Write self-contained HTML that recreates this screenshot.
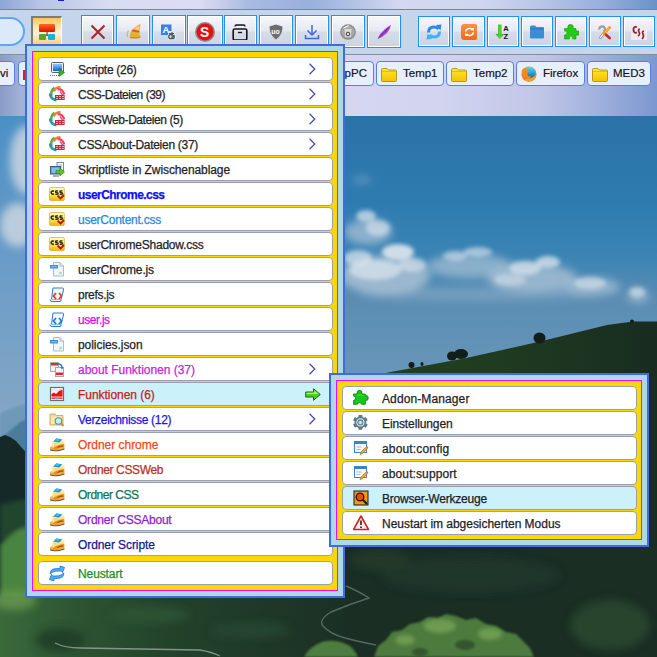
<!DOCTYPE html>
<html><head><meta charset="utf-8">
<style>
html,body{margin:0;padding:0;width:657px;height:657px;overflow:hidden;position:relative;font-family:"Liberation Sans",sans-serif;background:#1d2f24;}
.a{position:absolute;}
#bg{left:0;top:0;width:657px;height:657px;}
#topbar{left:0;top:0;width:657px;height:9px;background:linear-gradient(90deg,#8ea6d2 0px,#b6c4e6 40px,#d8dcf2 110px,#dcdcf4 200px,#a8bae0 250px,#98b0dc 310px,#b0c0e4 350px,#d4d8f2 400px,#d0d6f0 480px,#b8c6e8 540px,#98b0dc 600px,#6a92c8 657px);}
#line1{left:0;top:9px;width:657px;height:1px;background:#7f848c;}
#toolbar{left:0;top:10px;width:657px;height:44px;background:#c5d5ec;}
#line2{left:0;top:54px;width:657px;height:1px;background:#878c96;}
#bmbar{left:0;top:55px;width:657px;height:61px;background:radial-gradient(ellipse 50px 30px at 640px 95px,rgba(70,110,185,0.75),rgba(70,110,185,0)),linear-gradient(90deg,#8a9cc6 0px,#a0b0d6 20px,#c8cce8 120px,#d6d6f0 330px,#d2d4f0 440px,#c0c6e6 540px,#a4b4de 590px,#7c98d0 657px);}
.tb{position:absolute;top:15px;height:33px;box-sizing:border-box;border:1px solid #1e90ff;box-shadow:inset 0 0 0 1px #fff;background:linear-gradient(#f7f8fb 0%,#e4e8f0 48%,#d6dce8 52%,#ccd4e2 100%);}
.tb2{top:16px;height:31px;}
.bm{position:absolute;top:61px;height:25px;box-sizing:border-box;border:1px solid #5a7ede;border-radius:4px;background:#e6effc;font-size:11.5px;color:#201020;line-height:23px;white-space:nowrap;}
.bm span{-webkit-text-stroke:0.2px currentColor;}
.mb{position:absolute;background:#4169e1;}
.mc{position:absolute;background:#add8e6;}
.mm{position:absolute;background:#ff00ff;}
.my{position:absolute;background:#ffd700;}
.it{position:absolute;box-sizing:border-box;height:24px;border:1px solid #9aa0ad;border-radius:4px;background:#fff;font-size:12px;line-height:22px;white-space:nowrap;color:#1e1e28;}
.it span{position:absolute;left:39px;top:1px;-webkit-text-stroke:0.25px currentColor;}
.it .ic{position:absolute;left:10px;top:3px;width:16px;height:16px;}
.it .ar{position:absolute;left:269px;top:5px;width:8px;height:12px;}
.it .ga{position:absolute;left:266px;top:5px;}
.hl{background:#cbf1fb;}
</style></head>
<body>
<svg id="bg" class="a" width="657" height="657" viewBox="0 0 657 657">
  <defs>
    <linearGradient id="sky" x1="0" y1="116" x2="0" y2="420" gradientUnits="userSpaceOnUse">
      <stop offset="0" stop-color="#2a72a7"/>
      <stop offset="0.28" stop-color="#2e7bb0"/>
      <stop offset="0.45" stop-color="#3a84b4"/>
      <stop offset="0.6" stop-color="#5a8cb2"/>
      <stop offset="0.85" stop-color="#6896ba"/>
      <stop offset="1" stop-color="#7aa2c0"/>
    </linearGradient>
    <linearGradient id="skyL" x1="0" y1="116" x2="0" y2="410" gradientUnits="userSpaceOnUse">
      <stop offset="0" stop-color="#4a90c6"/>
      <stop offset="0.5" stop-color="#6a9cc8"/>
      <stop offset="1" stop-color="#82a6c4"/>
    </linearGradient>
    <filter id="bl4" x="-50%" y="-50%" width="200%" height="200%"><feGaussianBlur stdDeviation="4"/></filter>
    <filter id="bl2" x="-50%" y="-50%" width="200%" height="200%"><feGaussianBlur stdDeviation="2"/></filter>
    <filter id="bl1" x="-50%" y="-50%" width="200%" height="200%"><feGaussianBlur stdDeviation="1"/></filter>
  </defs>
  <rect x="0" y="116" width="657" height="541" fill="url(#sky)"/>
  <rect x="0" y="116" width="30" height="300" fill="url(#skyL)"/>
  <!-- left clouds -->
  <g filter="url(#bl4)" fill="#c4d2e0" opacity="0.9">
    <ellipse cx="26" cy="160" rx="16" ry="34"/>
    <ellipse cx="18" cy="225" rx="18" ry="22"/>
  </g>
  <!-- right clouds -->
  <g filter="url(#bl4)" fill="#a8c0d4">
    <ellipse cx="362" cy="180" rx="10" ry="3" opacity="0.5"/>
    <ellipse cx="368" cy="232" rx="24" ry="13" opacity="0.75"/>
    <ellipse cx="385" cy="275" rx="45" ry="20" opacity="0.85"/>
    <ellipse cx="470" cy="266" rx="42" ry="12" opacity="0.7"/>
    <ellipse cx="532" cy="278" rx="45" ry="14" opacity="0.8"/>
    <ellipse cx="592" cy="287" rx="28" ry="9" opacity="0.75"/>
    <ellipse cx="638" cy="296" rx="11" ry="7" opacity="0.7"/>
    <ellipse cx="480" cy="294" rx="120" ry="7" opacity="0.35"/>
  </g>
  <g filter="url(#bl2)" fill="#dde6ee">
    <ellipse cx="366" cy="216" rx="10" ry="6" opacity="0.7"/>
    <ellipse cx="378" cy="228" rx="12" ry="8" opacity="0.6"/>
    <ellipse cx="358" cy="258" rx="14" ry="8" opacity="0.7"/>
    <ellipse cx="398" cy="252" rx="16" ry="8" opacity="0.9"/>
    <ellipse cx="375" cy="270" rx="26" ry="10" opacity="0.7"/>
    <ellipse cx="412" cy="265" rx="14" ry="7" opacity="0.6"/>
    <ellipse cx="455" cy="256" rx="12" ry="5" opacity="0.55"/>
    <ellipse cx="478" cy="252" rx="14" ry="5" opacity="0.6"/>
    <ellipse cx="525" cy="268" rx="16" ry="7" opacity="0.7"/>
    <ellipse cx="548" cy="262" rx="12" ry="6" opacity="0.75"/>
    <ellipse cx="510" cy="280" rx="16" ry="6" opacity="0.5"/>
    <ellipse cx="590" cy="283" rx="16" ry="6" opacity="0.6"/>
    <ellipse cx="637" cy="292" rx="8" ry="5" opacity="0.6"/>
  </g>
  <!-- distant mountains left -->
  <path d="M0 413 Q10 409 18 406 L34 402 L34 657 L0 657Z" fill="#6e9ab8" filter="url(#bl1)"/>
  <path d="M0 440 Q10 430 20 422 L34 416 L34 657 L0 657Z" fill="#4c7c9c" filter="url(#bl1)"/>
  <!-- right hill -->
  <linearGradient id="hillg" x1="345" y1="0" x2="657" y2="0" gradientUnits="userSpaceOnUse">
    <stop offset="0" stop-color="#22421f"/><stop offset="0.5" stop-color="#1f3b20"/><stop offset="1" stop-color="#182c20"/>
  </linearGradient>
  <path d="M345 385 L388 372.5 L464 358.5 L540 341.5 L607 325 L633 321.5 L657 321.5 L657 657 L345 657Z" fill="url(#hillg)"/>
  <g fill="#121e1a">
    <ellipse cx="411.5" cy="365" rx="3" ry="3"/>
    <ellipse cx="422" cy="364" rx="1.5" ry="2"/>
    <ellipse cx="452" cy="356" rx="5" ry="4.5"/>
    <ellipse cx="461" cy="354" rx="7" ry="5"/>
    <ellipse cx="539.5" cy="338" rx="6" ry="5.5"/>
    <ellipse cx="632" cy="321" rx="2" ry="1.5"/>
  </g>
  <!-- left forest -->
  <path d="M0 437 L5 435 L10 437 L16 441 L22 448 L26 452 L34 455 L34 657 L0 657Z" fill="#152a28"/>
  <path d="M0 505 Q15 500 34 498 L34 540 L0 540Z" fill="#24442e" filter="url(#bl2)"/>
  <path d="M0 545 Q8 536 16 531 Q24 526 34 527 L34 600 L0 600Z" fill="#4a8440" filter="url(#bl2)"/>
  <path d="M0 598 Q15 596 34 602 L34 640 L0 640Z" fill="#2e5034" filter="url(#bl1)"/>
  <rect x="0" y="638" width="34" height="5" fill="#22403a" filter="url(#bl1)"/>
  <!-- bottom -->
  <linearGradient id="botg" x1="0" y1="0" x2="345" y2="0" gradientUnits="userSpaceOnUse">
    <stop offset="0" stop-color="#3a6a3a"/><stop offset="0.25" stop-color="#2c5232"/><stop offset="0.5" stop-color="#22422a"/><stop offset="1" stop-color="#1b3025"/>
  </linearGradient>
  <rect x="0" y="598" width="345" height="59" fill="url(#botg)"/>
  <g filter="url(#bl4)" opacity="0.8">
    <ellipse cx="15" cy="600" rx="22" ry="10" fill="#6a9a50"/>
    <ellipse cx="60" cy="640" rx="25" ry="12" fill="#1e3a28"/>
    <ellipse cx="150" cy="615" rx="40" ry="8" fill="#2e5634"/>
    <ellipse cx="250" cy="630" rx="40" ry="8" fill="#284a30"/>
  </g>
  
  <rect x="345" y="547" width="312" height="110" fill="#1a2e24"/>
  <g filter="url(#bl4)">
    <ellipse cx="470" cy="575" rx="90" ry="18" fill="#22382a" opacity="0.8"/>
    <ellipse cx="610" cy="625" rx="40" ry="25" fill="#2a4a30" opacity="0.8"/>
    <ellipse cx="380" cy="560" rx="30" ry="10" fill="#243c2c" opacity="0.8"/>
  </g>
  
  <path d="M374 657 L378 646 L386 640 L392 632 L402 630 L410 624 L420 622 L428 617 L438 618 L446 614 L456 616 L466 620 L476 618 L486 624 L496 626 L506 632 L516 634 L524 642 L530 648 L534 657Z" fill="#4e7a3e" filter="url(#bl1)"/>
  <g filter="url(#bl2)" fill="#78a858" opacity="0.75">
    <ellipse cx="440" cy="626" rx="16" ry="7"/>
    <ellipse cx="490" cy="634" rx="12" ry="6"/>
    <ellipse cx="405" cy="640" rx="10" ry="5"/>
  </g>
  <g filter="url(#bl1)" fill="#2e4e2c" opacity="0.8">
    <ellipse cx="465" cy="645" rx="10" ry="5"/>
    <ellipse cx="420" cy="652" rx="8" ry="4"/>
  </g>
  <path d="M55 643 Q65 648 80 648 Q150 649 200 650 Q212 652 220 656" stroke="#9aa8a0" stroke-width="1.3" fill="none" opacity="0.8"/>
<path d="M346 586 Q360 592 369 598 Q350 604 331 612 Q318 620 323 626 Q330 634 345 638 Q360 642 376 645" stroke="#5e7268" stroke-width="1.4" fill="none" opacity="0.85"/>
  <path d="M304 657 Q310 646 322 642 Q336 638 350 646 Q356 652 358 657Z" fill="#4e7e40" filter="url(#bl1)"/>
</svg>

<div id="topbar" class="a"></div>
<div class="a" style="left:58px;top:0;width:6px;height:1px;background:#1a1ae8"></div>
<div id="line1" class="a"></div>
<div id="toolbar" class="a"></div>
<div id="line2" class="a"></div>
<div id="bmbar" class="a"></div>
<!-- search pill -->
<div class="a" style="left:-30px;top:17px;width:51px;height:25px;border:2px solid #5aa8f8;border-radius:15px;background:#dce9fb"></div>
<!-- menu button -->
<div class="a" style="left:31px;top:16px;width:31px;height:30px;box-sizing:border-box;border-top:2px solid #7c7c7c;border-left:2px solid #7c7c7c;border-right:1px solid #fff;background:linear-gradient(#ffc458 0%,#ffe8b8 35%,#fff0d8 55%,#ffd890 85%,#ffc060 100%)"></div>
<svg class="a" style="left:38px;top:23px" width="18" height="18" viewBox="0 0 18 18">
<defs><linearGradient id="mbr" x1="0" y1="0" x2="0" y2="1"><stop offset="0" stop-color="#ff6a20"/><stop offset="1" stop-color="#e01000"/></linearGradient></defs>
<rect x="1" y="1" width="16" height="8" rx="1" fill="url(#mbr)"/>
<path d="M9 9 V12 M9 12 L5 14 M9 12 L13 14" stroke="#333" stroke-width="1"/>
<rect x="1" y="11" width="7" height="6" rx="1" fill="#58a828"/>
<rect x="10" y="11" width="7" height="6" rx="1" fill="#18b0e0"/>
</svg>
<!-- toolbar buttons -->
<div class="tb" style="left:81px;width:33px"></div>
<div class="tb" style="left:116px;width:34px"></div>
<div class="tb" style="left:152px;width:34px"></div>
<div class="tb" style="left:187px;width:36px"></div>
<div class="tb" style="left:224px;width:33px"></div>
<div class="tb" style="left:259px;width:34px"></div>
<div class="tb" style="left:295px;width:34px"></div>
<div class="tb" style="left:331px;width:34px"></div>
<div class="tb" style="left:367px;width:34px"></div>
<div class="tb tb2" style="left:418px;width:32px"></div>
<div class="tb tb2" style="left:452px;width:33px"></div>
<div class="tb tb2" style="left:487px;width:32px"></div>
<div class="tb tb2" style="left:521px;width:32px"></div>
<div class="tb tb2" style="left:555px;width:32px"></div>
<div class="tb tb2" style="left:589px;width:32px"></div>
<div class="tb tb2" style="left:623px;width:32px"></div>
<svg width="16" height="16" viewBox="0 0 16 16" style="position:absolute;left:89.5px;top:23.5px"><path d="M1.5 1.5 L14.5 14.5 M14.5 1.5 L1.5 14.5" stroke="#b02424" stroke-width="2"/></svg>
<svg width="16" height="16" viewBox="0 0 16 16" style="position:absolute;left:125.5px;top:23px"><path d="M6 7.2 Q9 3.5 13.5 1.2 L14.6 1.5 Q14 5 13.2 8.6 Q13.3 12 15 13.8 Q14 15.5 10 15.2 Q6 15.6 3.6 14.8 Q3.5 10.5 6 7.2Z" fill="#e4b030"/>
<path d="M8.5 5.5 Q11 3.5 13.5 2.5 Q13.2 6 12.5 7.5 Q10 7 8.5 5.5Z" fill="#f4d070"/>
<path d="M5.8 7.4 Q9.5 8.4 13.4 8.6" stroke="#e84c4c" stroke-width="1.7" fill="none"/>
<path d="M4.3 14.6 Q9 15.4 14.2 14.6" stroke="#b08010" stroke-width="0.9" fill="none"/>
<path d="M2.4 7.5 Q0.8 10.5 1.5 14" stroke="#a8c4a0" stroke-width="1.3" fill="none"/></svg>
<svg width="16" height="16" viewBox="0 0 16 16" style="position:absolute;left:160px;top:23.5px"><rect x="1" y="0.5" width="10.5" height="10.5" fill="#3c7ee8"/>
<text x="2.6" y="9.3" font-family="Liberation Sans" font-weight="bold" font-size="9.5" fill="#fff">A</text>
<rect x="8" y="7" width="8" height="9" fill="#e2e4e8"/>
<circle cx="11" cy="12.5" r="2.2" fill="none" stroke="#4a5868" stroke-width="1.3"/>
<path d="M9 9.5 H14 M12 8 V15 M14 11 Q15 14 13 15" fill="none" stroke="#4a5868" stroke-width="1.1"/></svg>
<svg width="20" height="20" viewBox="0 0 16 16" style="position:absolute;left:195.1px;top:21.8px"><circle cx="8" cy="8" r="8" fill="#8c8c8c"/>
<circle cx="8" cy="8" r="6.8" fill="#e21212"/>
<text x="3.9" y="12.3" font-family="Liberation Sans" font-weight="bold" font-size="11" fill="#fff">S</text></svg>
<svg width="16" height="16" viewBox="0 0 16 16" style="position:absolute;left:232px;top:24px"><path d="M3 2.5 Q3 1 4.5 1 H11.5 Q13 1 13 2.5" fill="none" stroke="#151515" stroke-width="1.4"/>
<rect x="1.2" y="5" width="13.6" height="11" rx="1.5" fill="none" stroke="#151515" stroke-width="1.6"/>
<path d="M6 8.5 H10" stroke="#151515" stroke-width="1.4"/></svg>
<svg width="16" height="16" viewBox="0 0 16 16" style="position:absolute;left:268px;top:24px"><path d="M8 0.5 L14.5 2.5 Q14.5 11 8 15.5 Q1.5 11 1.5 2.5 Z" fill="#6e6e6e"/>
<text x="3.3" y="10" font-family="Liberation Sans" font-weight="bold" font-size="7" fill="#fff">uo</text></svg>
<svg width="16" height="16" viewBox="0 0 16 16" style="position:absolute;left:303.5px;top:23.5px"><path d="M8 1 V11 M3.5 6.5 L8 11 L12.5 6.5 M1.5 11 V14.5 H14.5 V11" fill="none" stroke="#3a6ae4" stroke-width="1.5"/></svg>
<svg width="16" height="16" viewBox="0 0 16 16" style="position:absolute;left:340px;top:24px"><circle cx="8" cy="8" r="7.8" fill="#8a8a8a"/>
<circle cx="8" cy="8" r="6.5" fill="#a8a8a8"/>
<path d="M4.5 5 H11.5 L10.8 13 H5.2 Z" fill="#d8d8d8"/>
<circle cx="8" cy="10" r="1.8" fill="none" stroke="#404040" stroke-width="1"/>
<path d="M3.5 4 L9 1.5" stroke="#fff" stroke-width="1"/></svg>
<svg width="16" height="16" viewBox="0 0 16 16" style="position:absolute;left:376px;top:23.5px"><path d="M1.5 15 Q4 9 9 5 Q13 2 15 0.5 Q14.5 5 11 9 Q7 13 1.5 15Z" fill="#a848d8"/>
<path d="M2.5 14 Q7 10 13 3" stroke="#5a1a88" stroke-width="0.9" fill="none"/></svg>
<svg width="16" height="16" viewBox="0 0 16 16" style="position:absolute;left:426px;top:24px"><path d="M2.5 8.5 Q2.5 3 8 3 Q11 3 12.5 5" fill="none" stroke="#2a8ae8" stroke-width="3"/>
<path d="M10 1 L15.5 0.5 L14.5 6.5 Z" fill="#2a8ae8"/>
<path d="M13.5 7.5 Q13.5 13 8 13 Q5 13 3.5 11" fill="none" stroke="#42b0f8" stroke-width="3"/>
<path d="M6 15 L0.5 15.5 L1.5 9.5 Z" fill="#42b0f8"/></svg>
<svg width="16" height="16" viewBox="0 0 16 16" style="position:absolute;left:460.5px;top:23.5px"><defs><linearGradient id="gor" x1="0" y1="0" x2="0" y2="1"><stop offset="0" stop-color="#ff9040"/><stop offset="1" stop-color="#f06a18"/></linearGradient></defs>
<rect x="0" y="0" width="17" height="16" rx="3.5" fill="url(#gor)"/>
<path d="M4.5 7.5 A4 4 0 0 1 11.5 6 M12.5 8.5 A4 4 0 0 1 5.5 10" fill="none" stroke="#fff" stroke-width="1.5"/>
<path d="M10 4 L13 4 L12.5 7.5Z M7 12 L4 12 L4.5 8.5Z" fill="#fff"/></svg>
<svg width="16" height="16" viewBox="0 0 16 16" style="position:absolute;left:495px;top:24px"><defs><linearGradient id="gaz" x1="0" y1="0" x2="1" y2="0"><stop offset="0" stop-color="#1a9a1a"/><stop offset="0.5" stop-color="#60d040"/><stop offset="1" stop-color="#1a9a1a"/></linearGradient></defs>
<path d="M3 0.5 H6.5 V10 H9 L4.8 15 L0.5 10 H3 Z" fill="url(#gaz)"/>
<text x="8.3" y="7" font-family="Liberation Sans" font-weight="bold" font-size="7.5" fill="#111">A</text>
<text x="8.5" y="14.8" font-family="Liberation Sans" font-weight="bold" font-size="7.5" fill="#111">Z</text></svg>
<svg width="16" height="16" viewBox="0 0 16 16" style="position:absolute;left:529px;top:24px"><path d="M1 3 Q1 1.5 2.5 1.5 H6 L7.5 3 H14 Q15 3 15 4 V13.5 Q15 14.5 14 14.5 H2 Q1 14.5 1 13.5 Z" fill="#3a8ed8"/>
<rect x="1" y="4.5" width="14" height="1" fill="#2a78c0"/></svg>
<svg width="16" height="16" viewBox="0 0 16 16" style="position:absolute;left:563px;top:24px"><path d="M1.5 4.5 H5 Q4 0.5 7.5 0.5 Q11 0.5 10 4.5 H13 V7 Q16.5 6 16.5 9 Q16.5 12 13 11 V15 H9.5 Q10.5 12 8 12 Q5.5 12 6.5 15 H1.5 V11 Q4 11.5 4 9 Q4 6.5 1.5 7 Z" fill="#22cc10" stroke="#139a10" stroke-width="0.6"/></svg>
<svg width="16" height="16" viewBox="0 0 16 16" style="position:absolute;left:597px;top:24px"><path d="M2.4 5.6 A2.8 2.8 0 1 1 6.6 7.6" fill="none" stroke="#9a9a9a" stroke-width="2.2"/>
<path d="M7.6 8.2 L3.4 13.6" stroke="#8c8c8c" stroke-width="2.6" stroke-linecap="round"/>
<path d="M7.6 8.2 L3.4 13.6" stroke="#f4f4f4" stroke-width="1.2" stroke-linecap="round"/>
<path d="M8.4 10.2 L12.6 14" stroke="#c82838" stroke-width="2.8" stroke-linecap="round"/>
<path d="M7 9.4 L12.6 3.6" stroke="#f49a10" stroke-width="2.8" stroke-linecap="round"/>
<path d="M8.5 7.5 L11.8 4.2" stroke="#ffd060" stroke-width="0.9" stroke-linecap="round"/></svg>
<svg width="16" height="16" viewBox="0 0 16 16" style="position:absolute;left:631px;top:24px"><rect x="0" y="0" width="16" height="16" fill="#ececec"/>
<path d="M6 3 Q2 2 2.5 6.5 Q3 9.5 6 8.5" fill="none" stroke="#a01838" stroke-width="1.8"/>
<path d="M9 5 Q6.5 5.5 8 8 Q9.5 10.5 7 12" fill="none" stroke="#a01838" stroke-width="1.6"/>
<path d="M13 7 Q10.5 7.5 12 10 Q13.5 12.5 11 15" fill="none" stroke="#a01838" stroke-width="1.6"/></svg>
<!-- bookmarks -->
<div class="bm" style="left:-40px;width:55px"><span style="position:absolute;left:39px;top:0">vi</span></div>
<div class="bm" style="left:18px;width:60px"><div style="position:absolute;left:4px;top:8px;width:5px;height:10px;background:#d82020"></div></div>
<div class="bm" style="left:300px;width:74px"><span style="position:absolute;right:6px;top:0">LapPC</span></div>
<div class="bm" style="left:376px;width:68px"><svg width="16" height="16" viewBox="0 0 16 16" style="position:absolute;left:4px;top:4.5px"><defs><linearGradient id="gbf" x1="0" y1="0" x2="0" y2="1"><stop offset="0" stop-color="#ffe830"/><stop offset="1" stop-color="#f8c000"/></linearGradient></defs>
<path d="M0.5 2.5 Q0.5 1.5 1.5 1.5 H6 L7.5 3 H14.5 Q15.5 3 15.5 4 V13.5 Q15.5 14.5 14.5 14.5 H1.5 Q0.5 14.5 0.5 13.5 Z" fill="url(#gbf)" stroke="#b08400" stroke-width="0.8"/>
<path d="M1 4.5 H15" stroke="#d8a800" stroke-width="0.6"/></svg><span style="position:absolute;left:26px;top:0">Temp1</span></div>
<div class="bm" style="left:446px;width:68px"><svg width="16" height="16" viewBox="0 0 16 16" style="position:absolute;left:4px;top:4.5px"><defs><linearGradient id="gbf" x1="0" y1="0" x2="0" y2="1"><stop offset="0" stop-color="#ffe830"/><stop offset="1" stop-color="#f8c000"/></linearGradient></defs>
<path d="M0.5 2.5 Q0.5 1.5 1.5 1.5 H6 L7.5 3 H14.5 Q15.5 3 15.5 4 V13.5 Q15.5 14.5 14.5 14.5 H1.5 Q0.5 14.5 0.5 13.5 Z" fill="url(#gbf)" stroke="#b08400" stroke-width="0.8"/>
<path d="M1 4.5 H15" stroke="#d8a800" stroke-width="0.6"/></svg><span style="position:absolute;left:26px;top:0">Temp2</span></div>
<div class="bm" style="left:516px;width:69px"><svg width="16" height="16" viewBox="0 0 16 16" style="position:absolute;left:4px;top:4px"><defs><linearGradient id="gffg" x1="0" y1="0" x2="0" y2="1"><stop offset="0" stop-color="#40e0f8"/><stop offset="1" stop-color="#0868c0"/></linearGradient>
<linearGradient id="gffo" x1="0" y1="0" x2="0" y2="1"><stop offset="0" stop-color="#ff9a20"/><stop offset="1" stop-color="#f07010"/></linearGradient></defs>
<circle cx="8" cy="8.2" r="7.6" fill="url(#gffo)"/>
<circle cx="9" cy="6.8" r="5.6" fill="url(#gffg)"/>
<path d="M0.6 6 Q1 2.5 3.5 2.2 L5 4 Q7.5 3.6 8.5 5.5 Q6 6 6.5 9 Q7.5 11 10.5 10.5 Q9 12.5 6 12 Q2 11 0.6 6Z" fill="#f88a18"/>
<path d="M6 12.4 Q11 13 14.6 9 Q14.5 13 10 15.2 Q6 16 3 14Z" fill="#f0a030"/></svg><span style="position:absolute;left:26px;top:0">Firefox</span></div>
<div class="bm" style="left:587px;width:64px"><svg width="16" height="16" viewBox="0 0 16 16" style="position:absolute;left:4px;top:4.5px"><defs><linearGradient id="gbf" x1="0" y1="0" x2="0" y2="1"><stop offset="0" stop-color="#ffe830"/><stop offset="1" stop-color="#f8c000"/></linearGradient></defs>
<path d="M0.5 2.5 Q0.5 1.5 1.5 1.5 H6 L7.5 3 H14.5 Q15.5 3 15.5 4 V13.5 Q15.5 14.5 14.5 14.5 H1.5 Q0.5 14.5 0.5 13.5 Z" fill="url(#gbf)" stroke="#b08400" stroke-width="0.8"/>
<path d="M1 4.5 H15" stroke="#d8a800" stroke-width="0.6"/></svg><span style="position:absolute;left:25px;top:0">MED3</span></div>

<div class="mb" style="left:25px;top:44px;width:320px;height:554px"></div>
<div class="mc" style="left:27px;top:46px;width:316px;height:550px"></div>
<div class="mm" style="left:32px;top:51px;width:306px;height:540px"></div>
<div class="my" style="left:33px;top:52px;width:304px;height:538px"></div>
<div class="it" style="left:38px;top:57px;width:295px;"><svg class="ic"  width="16" height="16" viewBox="0 0 16 16"><defs><linearGradient id="gmon" x1="0" y1="0" x2="0" y2="1"><stop offset="0" stop-color="#8cc8ff"/><stop offset="1" stop-color="#1060e0"/></linearGradient></defs>
<rect x="2.5" y="1.5" width="12" height="10" rx="1" fill="#e8ecf0" stroke="#5a6270"/>
<rect x="4" y="3" width="9" height="7" fill="url(#gmon)"/>
<path d="M1 14.5 H11" stroke="#6a7280" stroke-width="1.2" stroke-dasharray="1 1"/>
<path d="M10 7.5 L15.5 11.5 L10 15.5 Z" fill="#28b428" stroke="#147814" stroke-width="0.6"/></svg><span style="color:#1e1e28;letter-spacing:-0.294px">Scripte (26)</span><svg class="ar" width="8" height="12" viewBox="0 0 8 12"><path d="M1.5 0.8 L6.8 6 L1.5 11.2" fill="none" stroke="#4c4cb4" stroke-width="1.3"/></svg></div>
<div class="it" style="left:38px;top:82px;width:295px;"><svg class="ic"  width="16" height="16" viewBox="0 0 16 16"><path d="M2.5 10.5 Q1.5 4 5.5 1.8" fill="none" stroke="#4cb040" stroke-width="2.4"/>
<path d="M4.8 5.5 Q6 1 11.5 1.2" fill="none" stroke="#f47a40" stroke-width="2.4"/>
<path d="M8.5 3.2 Q13.8 3 15.2 8.5" fill="none" stroke="#ec4858" stroke-width="2.2"/>
<path d="M11 5.5 L14 9.5" fill="none" stroke="#f048b0" stroke-width="1.4"/>
<path d="M0.8 7.5 Q1.5 13.2 7.5 14.3" fill="none" stroke="#2898b8" stroke-width="2.4"/>
<rect x="6" y="9" width="9.6" height="5" fill="#c42a3a"/>
<path d="M7 10.5h2M7 12.5h2M10 10.5h2M10 12.5h2M13 10.5h2M13 12.5h2" stroke="#f0b8c0" stroke-width="0.9"/></svg><span style="color:#1e1e28;letter-spacing:-0.476px">CSS-Dateien (39)</span><svg class="ar" width="8" height="12" viewBox="0 0 8 12"><path d="M1.5 0.8 L6.8 6 L1.5 11.2" fill="none" stroke="#4c4cb4" stroke-width="1.3"/></svg></div>
<div class="it" style="left:38px;top:107px;width:295px;"><svg class="ic"  width="16" height="16" viewBox="0 0 16 16"><path d="M2.5 10.5 Q1.5 4 5.5 1.8" fill="none" stroke="#4cb040" stroke-width="2.4"/>
<path d="M4.8 5.5 Q6 1 11.5 1.2" fill="none" stroke="#f47a40" stroke-width="2.4"/>
<path d="M8.5 3.2 Q13.8 3 15.2 8.5" fill="none" stroke="#ec4858" stroke-width="2.2"/>
<path d="M11 5.5 L14 9.5" fill="none" stroke="#f048b0" stroke-width="1.4"/>
<path d="M0.8 7.5 Q1.5 13.2 7.5 14.3" fill="none" stroke="#2898b8" stroke-width="2.4"/>
<rect x="6" y="9" width="9.6" height="5" fill="#c42a3a"/>
<path d="M7 10.5h2M7 12.5h2M10 10.5h2M10 12.5h2M13 10.5h2M13 12.5h2" stroke="#f0b8c0" stroke-width="0.9"/></svg><span style="color:#1e1e28;letter-spacing:-0.428px">CSSWeb-Dateien (5)</span><svg class="ar" width="8" height="12" viewBox="0 0 8 12"><path d="M1.5 0.8 L6.8 6 L1.5 11.2" fill="none" stroke="#4c4cb4" stroke-width="1.3"/></svg></div>
<div class="it" style="left:38px;top:132px;width:295px;"><svg class="ic"  width="16" height="16" viewBox="0 0 16 16"><path d="M2.5 10.5 Q1.5 4 5.5 1.8" fill="none" stroke="#4cb040" stroke-width="2.4"/>
<path d="M4.8 5.5 Q6 1 11.5 1.2" fill="none" stroke="#f47a40" stroke-width="2.4"/>
<path d="M8.5 3.2 Q13.8 3 15.2 8.5" fill="none" stroke="#ec4858" stroke-width="2.2"/>
<path d="M11 5.5 L14 9.5" fill="none" stroke="#f048b0" stroke-width="1.4"/>
<path d="M0.8 7.5 Q1.5 13.2 7.5 14.3" fill="none" stroke="#2898b8" stroke-width="2.4"/>
<rect x="6" y="9" width="9.6" height="5" fill="#c42a3a"/>
<path d="M7 10.5h2M7 12.5h2M10 10.5h2M10 12.5h2M13 10.5h2M13 12.5h2" stroke="#f0b8c0" stroke-width="0.9"/></svg><span style="color:#1e1e28;letter-spacing:-0.289px">CSSAbout-Dateien (37)</span><svg class="ar" width="8" height="12" viewBox="0 0 8 12"><path d="M1.5 0.8 L6.8 6 L1.5 11.2" fill="none" stroke="#4c4cb4" stroke-width="1.3"/></svg></div>
<div class="it" style="left:38px;top:157px;width:295px;"><svg class="ic"  width="16" height="16" viewBox="0 0 16 16"><rect x="8" y="1.5" width="6.5" height="9" fill="#f0f4f8" stroke="#7a8aa0"/>
<path d="M9.5 4h3.5M9.5 6h3.5" stroke="#9ab" stroke-width="0.8"/>
<rect x="1.5" y="5.5" width="10" height="7.5" fill="#3a8ce8" stroke="#4a5a70"/>
<rect x="2.5" y="6.5" width="8" height="5.5" fill="#78c0ff"/>
<path d="M4 15h6" stroke="#6a7a90" stroke-width="1.2"/>
<path d="M7 9.5h4v-2.5l4.5 4-4.5 4v-2.5h-4z" fill="#62c02a" stroke="#2e7a10" stroke-width="0.6"/></svg><span style="color:#1e1e28;letter-spacing:-0.095px">Skriptliste in Zwischenablage</span></div>
<div class="it" style="left:38px;top:182px;width:295px;"><svg class="ic"  width="16" height="16" viewBox="0 0 16 16"><defs><linearGradient id="gcssy" x1="0" y1="0" x2="0" y2="1"><stop offset="0" stop-color="#fffad0"/><stop offset="0.45" stop-color="#fff070"/><stop offset="1" stop-color="#f4b000"/></linearGradient></defs>
<rect x="0.5" y="1.5" width="14.8" height="13" rx="1.2" fill="url(#gcssy)" stroke="#e0a820" stroke-width="0.7"/>
<path d="M5 5.2 Q2.2 4.6 2.2 6.6 Q2.2 8.6 5 8" fill="none" stroke="#2a2a18" stroke-width="1.5"/>
<path d="M9 5 Q6.5 4.6 6.5 5.8 Q6.5 6.6 7.8 6.6 Q9.3 6.8 9.2 7.6 Q9 8.6 6.4 8.2" fill="none" stroke="#2a2a18" stroke-width="1.4"/>
<path d="M13.4 5 Q10.9 4.6 10.9 5.8 Q10.9 6.6 12.2 6.6 Q13.7 6.8 13.6 7.6 Q13.4 8.6 10.8 8.2" fill="none" stroke="#2a2a18" stroke-width="1.4"/>
<path d="M8.6 9.6 L11.5 12.4 L15 9" fill="none" stroke="#c01010" stroke-width="2"/></svg><span style="color:#1010f0;font-weight:bold;letter-spacing:-0.539px">userChrome.css</span></div>
<div class="it" style="left:38px;top:207px;width:295px;"><svg class="ic"  width="16" height="16" viewBox="0 0 16 16"><defs><linearGradient id="gcssy" x1="0" y1="0" x2="0" y2="1"><stop offset="0" stop-color="#fffad0"/><stop offset="0.45" stop-color="#fff070"/><stop offset="1" stop-color="#f4b000"/></linearGradient></defs>
<rect x="0.5" y="1.5" width="14.8" height="13" rx="1.2" fill="url(#gcssy)" stroke="#e0a820" stroke-width="0.7"/>
<path d="M5 5.2 Q2.2 4.6 2.2 6.6 Q2.2 8.6 5 8" fill="none" stroke="#2a2a18" stroke-width="1.5"/>
<path d="M9 5 Q6.5 4.6 6.5 5.8 Q6.5 6.6 7.8 6.6 Q9.3 6.8 9.2 7.6 Q9 8.6 6.4 8.2" fill="none" stroke="#2a2a18" stroke-width="1.4"/>
<path d="M13.4 5 Q10.9 4.6 10.9 5.8 Q10.9 6.6 12.2 6.6 Q13.7 6.8 13.6 7.6 Q13.4 8.6 10.8 8.2" fill="none" stroke="#2a2a18" stroke-width="1.4"/>
<path d="M8.6 9.6 L11.5 12.4 L15 9" fill="none" stroke="#c01010" stroke-width="2"/></svg><span style="color:#2a88e0;letter-spacing:-0.255px">userContent.css</span></div>
<div class="it" style="left:38px;top:232px;width:295px;"><svg class="ic"  width="16" height="16" viewBox="0 0 16 16"><defs><linearGradient id="gcssy" x1="0" y1="0" x2="0" y2="1"><stop offset="0" stop-color="#fffad0"/><stop offset="0.45" stop-color="#fff070"/><stop offset="1" stop-color="#f4b000"/></linearGradient></defs>
<rect x="0.5" y="1.5" width="14.8" height="13" rx="1.2" fill="url(#gcssy)" stroke="#e0a820" stroke-width="0.7"/>
<path d="M5 5.2 Q2.2 4.6 2.2 6.6 Q2.2 8.6 5 8" fill="none" stroke="#2a2a18" stroke-width="1.5"/>
<path d="M9 5 Q6.5 4.6 6.5 5.8 Q6.5 6.6 7.8 6.6 Q9.3 6.8 9.2 7.6 Q9 8.6 6.4 8.2" fill="none" stroke="#2a2a18" stroke-width="1.4"/>
<path d="M13.4 5 Q10.9 4.6 10.9 5.8 Q10.9 6.6 12.2 6.6 Q13.7 6.8 13.6 7.6 Q13.4 8.6 10.8 8.2" fill="none" stroke="#2a2a18" stroke-width="1.4"/>
<path d="M8.6 9.6 L11.5 12.4 L15 9" fill="none" stroke="#c01010" stroke-width="2"/></svg><span style="color:#1e1e28;letter-spacing:-0.228px">userChromeShadow.css</span></div>
<div class="it" style="left:38px;top:257px;width:295px;"><svg class="ic"  width="16" height="16" viewBox="0 0 16 16"><path d="M4.5 1.5 H11 L14.5 5 V15 H4.5 Z" fill="#eef6fc" stroke="#a8bccc"/>
<path d="M11 1.5 V5 H14.5" fill="#d8e8f4" stroke="#a8bccc"/>
<rect x="1" y="4" width="8" height="3.5" fill="#3a8ce0"/>
<path d="M2 5.75h6" stroke="#a8d4ff" stroke-width="0.8"/>
<circle cx="11.5" cy="12" r="1.3" fill="#a8d8a8"/></svg><span style="color:#1e1e28;letter-spacing:-0.164px">userChrome.js</span></div>
<div class="it" style="left:38px;top:282px;width:295px;"><svg class="ic"  width="16" height="16" viewBox="0 0 16 16"><path d="M4 2 H13.5 Q15 2 14.5 4 L12 13.5 H2.5 Z" fill="#f4f8fc" stroke="#2a7ad0"/>
<path d="M1 13.5 Q1 15.5 3 15.5 H11 Q12.5 15.5 12 13.5" fill="#f4f8fc" stroke="#2a7ad0"/>
<path d="M7 7 L4.5 10 L7 13 M10 7 L12.5 10 L10 13" fill="none" stroke="#e83828" stroke-width="1.8"/></svg><span style="color:#1e1e28;letter-spacing:-0.298px">prefs.js</span></div>
<div class="it" style="left:38px;top:307px;width:295px;"><svg class="ic"  width="16" height="16" viewBox="0 0 16 16"><path d="M4 2 H13.5 Q15 2 14.5 4 L12 13.5 H2.5 Z" fill="#f4f8fc" stroke="#2a7ad0"/>
<path d="M1 13.5 Q1 15.5 3 15.5 H11 Q12.5 15.5 12 13.5" fill="#f4f8fc" stroke="#2a7ad0"/>
<path d="M7 7 L4.5 10 L7 13 M10 7 L12.5 10 L10 13" fill="none" stroke="#2a78d0" stroke-width="1.8"/></svg><span style="color:#f000f0;letter-spacing:-0.427px">user.js</span></div>
<div class="it" style="left:38px;top:332px;width:295px;"><svg class="ic"  width="16" height="16" viewBox="0 0 16 16"><path d="M4.5 1.5 H11 L14.5 5 V15 H4.5 Z" fill="#eef6fc" stroke="#a8bccc"/>
<path d="M11 1.5 V5 H14.5" fill="#d8e8f4" stroke="#a8bccc"/>
<rect x="1" y="4" width="8" height="3.5" fill="#3a8ce0"/>
<path d="M2 5.75h6" stroke="#a8d4ff" stroke-width="0.8"/>
<circle cx="11.5" cy="12" r="1.3" fill="#a8d8a8"/></svg><span style="color:#1e1e28;letter-spacing:-0.06px">policies.json</span></div>
<div class="it" style="left:38px;top:357px;width:295px;"><svg class="ic"  width="16" height="16" viewBox="0 0 16 16"><rect x="1.5" y="1.5" width="8" height="9" fill="#eef2f6" stroke="#a0a8b0"/>
<rect x="2" y="2" width="7" height="2.5" fill="#e82828"/>
<rect x="6.5" y="6.5" width="8" height="9" fill="#f4f6f8" stroke="#a0a8b0"/>
<rect x="7" y="11.5" width="7" height="2.5" fill="#e82828"/>
<path d="M9 3 Q13 3 13 7" fill="none" stroke="#2a7ad8" stroke-width="1.6"/>
<path d="M11.5 6.5h3l-1.5 2z" fill="#2a7ad8"/></svg><span style="color:#c81ed8;letter-spacing:-0.02px">about Funktionen (37)</span><svg class="ar" width="8" height="12" viewBox="0 0 8 12"><path d="M1.5 0.8 L6.8 6 L1.5 11.2" fill="none" stroke="#4c4cb4" stroke-width="1.3"/></svg></div>
<div class="it hl" style="left:38px;top:382px;width:295px;"><svg class="ic"  width="16" height="16" viewBox="0 0 16 16"><rect x="1.5" y="1.5" width="13" height="13" fill="#f8f8f8" stroke="#6e6e6e" stroke-width="1.2"/>
<path d="M2.5 11 V8 L5 6.5 L7 8 L10 5 L13.5 3.5 V11 Z" fill="#f01010"/>
<path d="M2.5 5 L5 3.5 L8 5 L13.5 2.5" fill="none" stroke="#d8d8d8" stroke-width="1"/>
<path d="M2.5 11h11" stroke="#fff" stroke-width="0.8"/>
<rect x="2.5" y="11.5" width="11" height="1.3" fill="#f01010"/>
<circle cx="8" cy="12.3" r="1.4" fill="#58b8d0"/></svg><span style="color:#d01818;letter-spacing:-0.041px">Funktionen (6)</span><svg class="ga" width="16" height="13" viewBox="0 0 16 13"><path d="M0.7 4 H8.5 V0.7 L15.3 6.5 L8.5 12.3 V9 H0.7 Z" fill="#48d020" stroke="#206a10" stroke-width="1"/><path d="M1.5 4.8 H9.3 V2.5 L13.5 6 H1.5Z" fill="#c0f870" opacity="0.9"/></svg></div>
<div class="it" style="left:38px;top:407px;width:295px;"><svg class="ic"  width="16" height="16" viewBox="0 0 16 16"><path d="M1 3 H6 L7.5 4.5 H14 V14 H1 Z" fill="#f4d88a" stroke="#c8a050" stroke-width="0.8"/>
<rect x="2" y="5.5" width="11" height="7.5" fill="#fbe8b0"/>
<circle cx="9.5" cy="10" r="3.3" fill="#c8ecfc" stroke="#4a90c8" stroke-width="1.1"/>
<path d="M12 12.5 L14.5 15" stroke="#e89010" stroke-width="2"/></svg><span style="color:#1818e0;letter-spacing:-0.307px">Verzeichnisse (12)</span><svg class="ar" width="8" height="12" viewBox="0 0 8 12"><path d="M1.5 0.8 L6.8 6 L1.5 11.2" fill="none" stroke="#4c4cb4" stroke-width="1.3"/></svg></div>
<div class="it" style="left:38px;top:432px;width:295px;"><svg class="ic"  width="16" height="16" viewBox="0 0 16 16"><defs><linearGradient id="gord" x1="0" y1="0" x2="0" y2="1"><stop offset="0" stop-color="#fff0a0"/><stop offset="0.5" stop-color="#f8d470"/><stop offset="1" stop-color="#e89830"/></linearGradient></defs>
<path d="M3.2 5.2 L15.4 4.6 L15.4 13.2 L9 14.6 L1 14.2 L0.8 11 L3.2 9.5 Z" fill="url(#gord)"/>
<path d="M4.2 5.4 L7.4 2.2 L13.4 3.6 L10 6.4 Z" fill="#1a90e0"/>
<path d="M6 4.2 L8 3 L11 3.7 L9 5Z" fill="#40d0f8"/>
<path d="M4 12.6 Q8 8.5 15.2 8 L15.2 11.5 Q10 11 7 13.5 Z" fill="#e88a20"/>
<path d="M8.5 11.6 Q11 9.8 14 10" fill="none" stroke="#804010" stroke-width="0.9"/>
<path d="M1.2 14 Q6 15.4 10 14.6 L15.4 13" fill="none" stroke="#6a4a28" stroke-width="1"/>
<path d="M3.2 5.5 L4.5 11" stroke="#f8f0c0" stroke-width="1.2"/></svg><span style="color:#f04a14;letter-spacing:-0.023px">Ordner chrome</span></div>
<div class="it" style="left:38px;top:457px;width:295px;"><svg class="ic"  width="16" height="16" viewBox="0 0 16 16"><defs><linearGradient id="gord" x1="0" y1="0" x2="0" y2="1"><stop offset="0" stop-color="#fff0a0"/><stop offset="0.5" stop-color="#f8d470"/><stop offset="1" stop-color="#e89830"/></linearGradient></defs>
<path d="M3.2 5.2 L15.4 4.6 L15.4 13.2 L9 14.6 L1 14.2 L0.8 11 L3.2 9.5 Z" fill="url(#gord)"/>
<path d="M4.2 5.4 L7.4 2.2 L13.4 3.6 L10 6.4 Z" fill="#1a90e0"/>
<path d="M6 4.2 L8 3 L11 3.7 L9 5Z" fill="#40d0f8"/>
<path d="M4 12.6 Q8 8.5 15.2 8 L15.2 11.5 Q10 11 7 13.5 Z" fill="#e88a20"/>
<path d="M8.5 11.6 Q11 9.8 14 10" fill="none" stroke="#804010" stroke-width="0.9"/>
<path d="M1.2 14 Q6 15.4 10 14.6 L15.4 13" fill="none" stroke="#6a4a28" stroke-width="1"/>
<path d="M3.2 5.5 L4.5 11" stroke="#f8f0c0" stroke-width="1.2"/></svg><span style="color:#b8302c;letter-spacing:-0.37px">Ordner CSSWeb</span></div>
<div class="it" style="left:38px;top:482px;width:295px;"><svg class="ic"  width="16" height="16" viewBox="0 0 16 16"><defs><linearGradient id="gord" x1="0" y1="0" x2="0" y2="1"><stop offset="0" stop-color="#fff0a0"/><stop offset="0.5" stop-color="#f8d470"/><stop offset="1" stop-color="#e89830"/></linearGradient></defs>
<path d="M3.2 5.2 L15.4 4.6 L15.4 13.2 L9 14.6 L1 14.2 L0.8 11 L3.2 9.5 Z" fill="url(#gord)"/>
<path d="M4.2 5.4 L7.4 2.2 L13.4 3.6 L10 6.4 Z" fill="#1a90e0"/>
<path d="M6 4.2 L8 3 L11 3.7 L9 5Z" fill="#40d0f8"/>
<path d="M4 12.6 Q8 8.5 15.2 8 L15.2 11.5 Q10 11 7 13.5 Z" fill="#e88a20"/>
<path d="M8.5 11.6 Q11 9.8 14 10" fill="none" stroke="#804010" stroke-width="0.9"/>
<path d="M1.2 14 Q6 15.4 10 14.6 L15.4 13" fill="none" stroke="#6a4a28" stroke-width="1"/>
<path d="M3.2 5.5 L4.5 11" stroke="#f8f0c0" stroke-width="1.2"/></svg><span style="color:#0e7450;letter-spacing:-0.476px">Ordner CSS</span></div>
<div class="it" style="left:38px;top:507px;width:295px;"><svg class="ic"  width="16" height="16" viewBox="0 0 16 16"><defs><linearGradient id="gord" x1="0" y1="0" x2="0" y2="1"><stop offset="0" stop-color="#fff0a0"/><stop offset="0.5" stop-color="#f8d470"/><stop offset="1" stop-color="#e89830"/></linearGradient></defs>
<path d="M3.2 5.2 L15.4 4.6 L15.4 13.2 L9 14.6 L1 14.2 L0.8 11 L3.2 9.5 Z" fill="url(#gord)"/>
<path d="M4.2 5.4 L7.4 2.2 L13.4 3.6 L10 6.4 Z" fill="#1a90e0"/>
<path d="M6 4.2 L8 3 L11 3.7 L9 5Z" fill="#40d0f8"/>
<path d="M4 12.6 Q8 8.5 15.2 8 L15.2 11.5 Q10 11 7 13.5 Z" fill="#e88a20"/>
<path d="M8.5 11.6 Q11 9.8 14 10" fill="none" stroke="#804010" stroke-width="0.9"/>
<path d="M1.2 14 Q6 15.4 10 14.6 L15.4 13" fill="none" stroke="#6a4a28" stroke-width="1"/>
<path d="M3.2 5.5 L4.5 11" stroke="#f8f0c0" stroke-width="1.2"/></svg><span style="color:#8a1ed0;letter-spacing:-0.215px">Ordner CSSAbout</span></div>
<div class="it" style="left:38px;top:532px;width:295px;"><svg class="ic"  width="16" height="16" viewBox="0 0 16 16"><defs><linearGradient id="gord" x1="0" y1="0" x2="0" y2="1"><stop offset="0" stop-color="#fff0a0"/><stop offset="0.5" stop-color="#f8d470"/><stop offset="1" stop-color="#e89830"/></linearGradient></defs>
<path d="M3.2 5.2 L15.4 4.6 L15.4 13.2 L9 14.6 L1 14.2 L0.8 11 L3.2 9.5 Z" fill="url(#gord)"/>
<path d="M4.2 5.4 L7.4 2.2 L13.4 3.6 L10 6.4 Z" fill="#1a90e0"/>
<path d="M6 4.2 L8 3 L11 3.7 L9 5Z" fill="#40d0f8"/>
<path d="M4 12.6 Q8 8.5 15.2 8 L15.2 11.5 Q10 11 7 13.5 Z" fill="#e88a20"/>
<path d="M8.5 11.6 Q11 9.8 14 10" fill="none" stroke="#804010" stroke-width="0.9"/>
<path d="M1.2 14 Q6 15.4 10 14.6 L15.4 13" fill="none" stroke="#6a4a28" stroke-width="1"/>
<path d="M3.2 5.5 L4.5 11" stroke="#f8f0c0" stroke-width="1.2"/></svg><span style="color:#10188c;letter-spacing:-0.088px">Ordner Scripte</span></div>
<div class="it" style="left:38px;top:561px;width:295px;"><svg class="ic"  width="16" height="16" viewBox="0 0 16 16"><path d="M1.2 9 Q1 3.6 8 3.6 L11 3.6 L11 1 L15.5 2.5 L13.5 7.5 L12.5 6 Q9 6 6.5 6.2 Q3.5 6.8 1.2 9Z" fill="#50b0f8" stroke="#2070d0" stroke-width="0.8"/>
<path d="M14.8 8 Q15 13.4 8 13.4 L5 13.4 L5 16 L0.5 14.5 L2.5 9.5 L3.5 11 Q7 11 9.5 10.8 Q12.5 10.2 14.8 8Z" fill="#50b0f8" stroke="#2070d0" stroke-width="0.8"/></svg><span style="color:#1e8c28;letter-spacing:-0.107px">Neustart</span></div>
<div class="mb" style="left:329px;top:373px;width:320px;height:174px"></div>
<div class="mc" style="left:331px;top:375px;width:316px;height:170px"></div>
<div class="mm" style="left:336px;top:380px;width:306px;height:160px"></div>
<div class="my" style="left:337px;top:381px;width:304px;height:158px"></div>
<div class="it" style="left:342px;top:386px;width:295px;"><svg class="ic"  width="16" height="16" viewBox="0 0 16 16"><path d="M0.3 4 H4 Q3.5 0.3 6.5 0.3 Q9.5 0.3 9 4 H12.3 V5.5 Q15.3 5 15.3 8 Q15.3 11 12.3 10.5 V14.3 H8.5 Q8.5 12.6 6.5 12.6 Q4.5 12.6 4.5 14.3 H0.3 V10.5 Q2.6 10.5 2.6 8.2 Q2.6 6 0.3 6 Z" fill="#18c818" stroke="#0a7a0a" stroke-width="0.8"/>
<path d="M4 5 Q8 4.5 11 6" fill="none" stroke="#60f060" stroke-width="0.8" opacity="0.7"/></svg><span style="letter-spacing:0.111px">Addon-Manager</span></div>
<div class="it" style="left:342px;top:411px;width:295px;"><svg class="ic"  width="16" height="16" viewBox="0 0 16 16"><path d="M5.30 2.21 L5.56 0.03 L9.24 0.03 L9.50 2.21 L10.85 2.99 L12.87 2.12 L14.71 5.31 L12.95 6.62 L12.95 8.18 L14.71 9.49 L12.87 12.68 L10.85 11.81 L9.50 12.59 L9.24 14.77 L5.56 14.77 L5.30 12.59 L3.95 11.81 L1.93 12.68 L0.09 9.49 L1.85 8.18 L1.85 6.62 L0.09 5.31 L1.93 2.12 L3.95 2.99Z" fill="#5e7a8a"/>
<circle cx="7.4" cy="7.4" r="5.8" fill="#5e7a8a"/>
<circle cx="7.4" cy="7.4" r="3.6" fill="none" stroke="#e8f0f4" stroke-width="1.1"/>
<circle cx="7.4" cy="7.4" r="2.2" fill="#8ab0b8"/>
<circle cx="7.4" cy="7.4" r="1.5" fill="#a8f4f8"/></svg><span style="letter-spacing:-0.12px">Einstellungen</span></div>
<div class="it" style="left:342px;top:436px;width:295px;"><svg class="ic"  width="16" height="16" viewBox="0 0 16 16"><rect x="1.5" y="1.5" width="12" height="11" fill="#f4f8fc" stroke="#3a84cc"/>
<rect x="2" y="2" width="11" height="2" fill="#3a84cc"/>
<path d="M3.5 7h5M3.5 9.5h4" stroke="#9ab" stroke-width="0.8"/>
<path d="M7 15 L8 12 L13.5 6.5 L15 8 L9.5 13.5 Z" fill="#f0a030" stroke="#a86010" stroke-width="0.5"/>
<path d="M13.5 6.5 L15 8" stroke="#e860a0" stroke-width="1.4"/></svg><span style="letter-spacing:0.159px">about:config</span></div>
<div class="it" style="left:342px;top:461px;width:295px;"><svg class="ic"  width="16" height="16" viewBox="0 0 16 16"><rect x="1.5" y="1.5" width="12" height="11" fill="#f4f8fc" stroke="#3a84cc"/>
<rect x="2" y="2" width="11" height="2" fill="#3a84cc"/>
<path d="M3.5 7h5M3.5 9.5h4" stroke="#9ab" stroke-width="0.8"/>
<path d="M7 15 L8 12 L13.5 6.5 L15 8 L9.5 13.5 Z" fill="#f0a030" stroke="#a86010" stroke-width="0.5"/>
<path d="M13.5 6.5 L15 8" stroke="#e860a0" stroke-width="1.4"/></svg><span style="letter-spacing:0.108px">about:support</span></div>
<div class="it hl" style="left:342px;top:486px;width:295px;"><svg class="ic"  width="16" height="16" viewBox="0 0 16 16"><rect x="1" y="1" width="14" height="14" fill="#f89818" stroke="#1a1a1a" stroke-width="1"/>
<circle cx="7" cy="7" r="3.8" fill="#f04810" stroke="#1a1a1a" stroke-width="1.3"/>
<path d="M9.8 9.8 L14 14" stroke="#1a1a1a" stroke-width="2"/></svg><span style="letter-spacing:-0.211px">Browser-Werkzeuge</span></div>
<div class="it" style="left:342px;top:511px;width:295px;"><svg class="ic"  width="16" height="16" viewBox="0 0 16 16"><path d="M8 1 L15.5 14.5 H0.5 Z" fill="#f0f0f0" stroke="#d82020" stroke-width="1.6" stroke-linejoin="round"/>
<path d="M8 5.5 V10" stroke="#202020" stroke-width="1.6"/>
<circle cx="8" cy="12.2" r="0.9" fill="#202020"/></svg><span style="letter-spacing:-0.03px">Neustart im abgesicherten Modus</span></div>

</body></html>
